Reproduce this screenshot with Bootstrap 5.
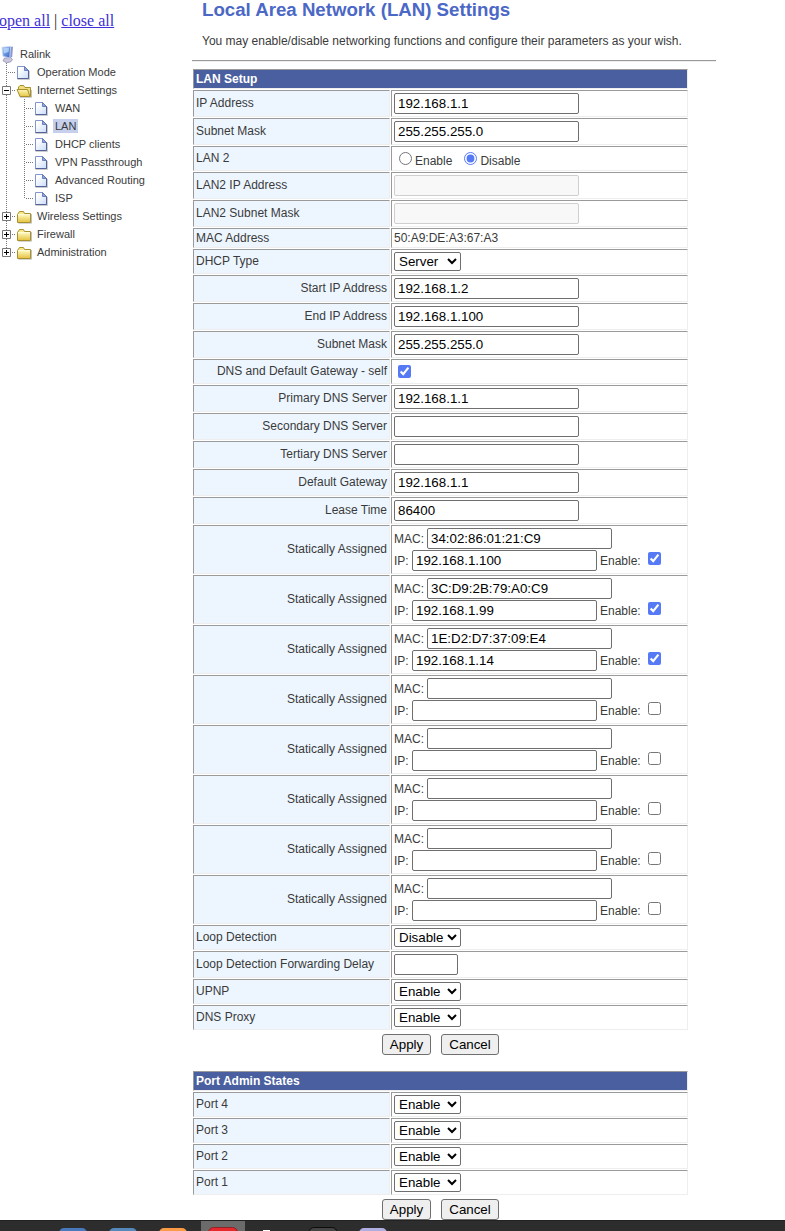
<!DOCTYPE html>
<html lang="en">
<head>
<meta charset="utf-8">
<title>LAN Settings</title>
<meta name="viewport" content="width=device-width, initial-scale=1">
<link href="https://cdn.jsdelivr.net/npm/bootstrap@5.3.0/dist/css/bootstrap.min.css" rel="stylesheet">
<style>
body{font:12px/14px "Liberation Sans",Arial,sans-serif;color:#3a3a3a;height:1231px;background:#fff}
.page-area{height:1220px}
.side{width:192px;padding-top:11px}
.toggle-links{font:16px/20px "Liberation Serif","Times New Roman",serif;margin-left:-1px;color:#222;height:34px;white-space:pre}
.toggle-links a{color:#4030d8;text-decoration:underline}
.tree{margin-left:-2px;font-size:11px;line-height:18px}
.tree .line{height:18px}
.tree svg{width:18px;height:18px;flex:none}
.tree span{margin-left:3px;white-space:nowrap}
.tree .root{margin-left:4px}
.tree .current{background:#c6d0ec;line-height:14px;height:14px;margin:2px 0 0 1px;padding:0 2px}
.main-area{width:524px}
h1{font-size:18.667px;line-height:22px;font-weight:bold;color:#4b68c6;margin:-1px 0 13px 10px;white-space:nowrap}
.intro{margin:0 0 12px 10px;white-space:nowrap}
.rule{height:2px;border-top:1px solid #9a9a9a;border-bottom:1px solid #eee;margin-bottom:6px}
.form-grid{width:497px;border-collapse:separate;border-spacing:1px;table-layout:fixed;line-height:14px}
.form-grid col:first-child{width:197px}
.form-grid th,.form-grid td{border:1px solid;border-color:#9a9a9a #eee #eee #9a9a9a;padding:0 2px;vertical-align:middle}
.form-grid .title{background:#4a5f9f;color:#fff;height:20px}
.form-grid .head{background:#edf6ff;font-weight:normal;text-align:left;padding-bottom:1px}
.form-grid .sub{text-align:right}
.h27 td{height:27px}.h25 td{height:25px}.h20 td{height:20px}.h49 td{height:49px}
.fld,.pick,.push{font:13.333px "Liberation Sans",Arial,sans-serif;color:#000;box-sizing:border-box}
.fld{width:185px;height:21px;border:1px solid #6f6f6f;border-radius:2px;padding:1px 3px;display:block;background:#fff}
.fld:disabled{background:#f8f8f8;border-color:#cfcfcf}
.fld.short{width:64px}
.pick{width:67px;height:19px;display:block;border:1px solid #6f6f6f;border-radius:2px;background:#fff}
.push{height:21px;border:1px solid #6f6f6f;border-radius:3px;background:#efefef;padding:0}
.push.apply{width:49px}.push.cancel{width:58px}
.form-grid input[type=checkbox],.form-grid input[type=radio]{width:13px;height:13px;margin:0;accent-color:#567af6;flex:none}
.lead-mac{width:33px}.lead-ip{width:18px}
.pair{height:22px;white-space:nowrap}
.pair:last-child{height:21px}
.pair .tick{margin:-4px 0 0 7px!important}
.pair .ip-field{margin-right:3px}
.radios{padding:2px 0 0 5px}
.radios label{margin:2px 12px 0 3px}
.buttons{gap:10px;margin:3px 0 15px 190px;height:21px}
.taskbar{height:11px;background:#2d2d2d;border-top:1px solid #222}
.taskbar svg{display:block}
</style>
</head>
<body class="overflow-hidden">
<svg width="0" height="0" class="position-absolute">
<defs>
<linearGradient id="gp" x1="0" y1="0" x2="1" y2="1"><stop offset=".2" stop-color="#fff"/><stop offset="1" stop-color="#c9dcfa"/></linearGradient>
<linearGradient id="gf" x1="0" y1="0" x2="0" y2="1"><stop offset="0" stop-color="#fdf6b8"/><stop offset="1" stop-color="#e6c545"/></linearGradient>
<linearGradient id="gm" x1="0" y1="0" x2="1" y2="1"><stop offset="0" stop-color="#a5c8f4"/><stop offset="1" stop-color="#2f62c8"/></linearGradient>
<symbol id="page" viewBox="0 0 18 18"><path d="M1.500 16.500h12V8" fill="none" stroke="#aaa" opacity=".6"/><path d="M1.500 3.500h7l4 4v8h-11z" fill="url(#gp)" stroke="#8196cf"/><path d="M8.500 3.500v4h4z" fill="#8fa4da" stroke="#5a6cae" stroke-width=".8"/><path d="M12.500 7.500v8h-11" fill="none" stroke="#54619d"/></symbol>
<symbol id="folder" viewBox="0 0 18 18"><path d="M2.500 16.200h13V7" fill="none" stroke="#999" opacity=".6"/><path d="M1.500 7.500l1-1.500 1-1.500h4l1 2h6v9h-13z" fill="#f6e88c" stroke="#a8902c"/><path d="M2 8h12v7H2z" fill="url(#gf)"/><path d="M2 7.500h12" stroke="#fffbd8"/></symbol>
<symbol id="open" viewBox="0 0 18 18"><path d="M4 16.300h11.500V9" fill="none" stroke="#999" opacity=".6"/><path d="M2.500 9V6l1.500-1.500h3.500l1.500 2h5.500v9H4z" fill="#f0df7c" stroke="#a8902c"/><path d="M1 8.500h10.500l2.500 7H4z" fill="url(#gf)" stroke="#a8902c"/></symbol>
<symbol id="pc" viewBox="0 0 18 18"><path d="M6.500 13l6-.5 2 2-2 2.500-4 .8-3.500-2z" fill="#c9c6dc" stroke="#77779c" stroke-width=".6"/><path d="M12.500 2l2.500-.4-.8 10.400-2.200 1z" fill="#8e96cc"/><path d="M4 2.300l8.700-.8-1 11.500-6.700-1.800z" fill="url(#gm)" stroke="#c3cff0" stroke-width=".8"/><path d="M5.300 3.200l5.700-.4-.4 4.200-4.800 1.500z" fill="#cae6fc" opacity=".65"/></symbol>
<symbol id="v" viewBox="0 0 18 18"><path d="M8.500 0v18" stroke="#777" stroke-dasharray="1 1"/></symbol>
<symbol id="tee" viewBox="0 0 18 18"><path d="M8.500 0v18M10 9.500h8" stroke="#777" stroke-dasharray="1 1"/></symbol>
<symbol id="ell" viewBox="0 0 18 18"><path d="M8.500 0v10M10 9.500h8" stroke="#777" stroke-dasharray="1 1"/></symbol>
<symbol id="minus" viewBox="0 0 18 18"><path d="M8.500 0v18M14 9.500h4" stroke="#777" stroke-dasharray="1 1"/><path d="M4.500 5.500h8v8h-8z" fill="#fff" stroke="#777"/><path d="M6 9.500h5" stroke="#000"/></symbol>
<symbol id="plus" viewBox="0 0 18 18"><path d="M8.500 0v18M14 9.500h4" stroke="#777" stroke-dasharray="1 1"/><path d="M4.500 5.500h8v8h-8z" fill="#fff" stroke="#777"/><path d="M6 9.500h5M8.500 7v5" stroke="#000"/></symbol>
<symbol id="pluslast" viewBox="0 0 18 18"><path d="M8.500 0v5M14 9.500h4" stroke="#777" stroke-dasharray="1 1"/><path d="M4.500 5.500h8v8h-8z" fill="#fff" stroke="#777"/><path d="M6 9.500h5M8.500 7v5" stroke="#000"/></symbol>
</defs>
</svg>
<div class="page-area d-flex overflow-hidden">
<nav class="side flex-shrink-0">
<div class="toggle-links"><a href="#">open all</a> | <a href="#">close all</a></div>
<div class="tree">
<div class="line d-flex"><svg><use href="#pc"/></svg><span class="root">Ralink</span></div>
<div class="line d-flex"><svg><use href="#tee"/></svg><svg><use href="#page"/></svg><span>Operation Mode</span></div>
<div class="line d-flex"><svg><use href="#minus"/></svg><svg><use href="#open"/></svg><span>Internet Settings</span></div>
<div class="line d-flex"><svg><use href="#v"/></svg><svg><use href="#tee"/></svg><svg><use href="#page"/></svg><span>WAN</span></div>
<div class="line d-flex"><svg><use href="#v"/></svg><svg><use href="#tee"/></svg><svg><use href="#page"/></svg><span class="current">LAN</span></div>
<div class="line d-flex"><svg><use href="#v"/></svg><svg><use href="#tee"/></svg><svg><use href="#page"/></svg><span>DHCP clients</span></div>
<div class="line d-flex"><svg><use href="#v"/></svg><svg><use href="#tee"/></svg><svg><use href="#page"/></svg><span>VPN Passthrough</span></div>
<div class="line d-flex"><svg><use href="#v"/></svg><svg><use href="#tee"/></svg><svg><use href="#page"/></svg><span>Advanced Routing</span></div>
<div class="line d-flex"><svg><use href="#v"/></svg><svg><use href="#ell"/></svg><svg><use href="#page"/></svg><span>ISP</span></div>
<div class="line d-flex"><svg><use href="#plus"/></svg><svg><use href="#folder"/></svg><span>Wireless Settings</span></div>
<div class="line d-flex"><svg><use href="#plus"/></svg><svg><use href="#folder"/></svg><span>Firewall</span></div>
<div class="line d-flex"><svg><use href="#pluslast"/></svg><svg><use href="#folder"/></svg><span>Administration</span></div>
</div>
</nav>
<main class="main-area flex-shrink-0">
<h1>Local Area Network (LAN) Settings</h1>
<p class="intro">You may enable/disable networking functions and configure their parameters as your wish.</p>
<div class="rule"></div>
<table class="form-grid">
<colgroup><col><col></colgroup>
<tbody>
<tr><th class="title" colspan="2">LAN Setup</th></tr>
<tr class="h27"><td class="head">IP Address</td><td><input class="fld" value="192.168.1.1"></td></tr>
<tr class="h27"><td class="head">Subnet Mask</td><td><input class="fld" value="255.255.255.0"></td></tr>
<tr class="h25"><td class="head">LAN 2</td><td><div class="d-flex align-items-start radios"><input type="radio" name="lan2"><label>Enable</label><input type="radio" name="lan2" checked><label>Disable</label></div></td></tr>
<tr class="h27"><td class="head">LAN2 IP Address</td><td><input class="fld" disabled></td></tr>
<tr class="h27"><td class="head">LAN2 Subnet Mask</td><td><input class="fld" disabled></td></tr>
<tr class="h20"><td class="head">MAC Address</td><td>50:A9:DE:A3:67:A3</td></tr>
<tr class="h25"><td class="head">DHCP Type</td><td><select class="pick"><option>Server</option></select></td></tr>
<tr class="h27"><td class="head sub">Start IP Address</td><td><input class="fld" value="192.168.1.2"></td></tr>
<tr class="h27"><td class="head sub">End IP Address</td><td><input class="fld" value="192.168.1.100"></td></tr>
<tr class="h27"><td class="head sub">Subnet Mask</td><td><input class="fld" value="255.255.255.0"></td></tr>
<tr class="h25"><td class="head sub">DNS and Default Gateway - self</td><td><input type="checkbox" class="d-block ms-1" checked></td></tr>
<tr class="h27"><td class="head sub">Primary DNS Server</td><td><input class="fld" value="192.168.1.1"></td></tr>
<tr class="h27"><td class="head sub">Secondary DNS Server</td><td><input class="fld"></td></tr>
<tr class="h27"><td class="head sub">Tertiary DNS Server</td><td><input class="fld"></td></tr>
<tr class="h27"><td class="head sub">Default Gateway</td><td><input class="fld" value="192.168.1.1"></td></tr>
<tr class="h27"><td class="head sub">Lease Time</td><td><input class="fld" value="86400"></td></tr>
<tr class="h49"><td class="head sub">Statically Assigned</td><td><div class="pair d-flex"><span class="lead-mac pt-1">MAC:</span><input class="fld" value="34:02:86:01:21:C9"></div><div class="pair d-flex align-items-center"><span class="lead-ip">IP:</span><input class="fld ip-field" value="192.168.1.100">Enable:<input type="checkbox" class="tick" checked></div></td></tr>
<tr class="h49"><td class="head sub">Statically Assigned</td><td><div class="pair d-flex"><span class="lead-mac pt-1">MAC:</span><input class="fld" value="3C:D9:2B:79:A0:C9"></div><div class="pair d-flex align-items-center"><span class="lead-ip">IP:</span><input class="fld ip-field" value="192.168.1.99">Enable:<input type="checkbox" class="tick" checked></div></td></tr>
<tr class="h49"><td class="head sub">Statically Assigned</td><td><div class="pair d-flex"><span class="lead-mac pt-1">MAC:</span><input class="fld" value="1E:D2:D7:37:09:E4"></div><div class="pair d-flex align-items-center"><span class="lead-ip">IP:</span><input class="fld ip-field" value="192.168.1.14">Enable:<input type="checkbox" class="tick" checked></div></td></tr>
<tr class="h49"><td class="head sub">Statically Assigned</td><td><div class="pair d-flex"><span class="lead-mac pt-1">MAC:</span><input class="fld"></div><div class="pair d-flex align-items-center"><span class="lead-ip">IP:</span><input class="fld ip-field">Enable:<input type="checkbox" class="tick"></div></td></tr>
<tr class="h49"><td class="head sub">Statically Assigned</td><td><div class="pair d-flex"><span class="lead-mac pt-1">MAC:</span><input class="fld"></div><div class="pair d-flex align-items-center"><span class="lead-ip">IP:</span><input class="fld ip-field">Enable:<input type="checkbox" class="tick"></div></td></tr>
<tr class="h49"><td class="head sub">Statically Assigned</td><td><div class="pair d-flex"><span class="lead-mac pt-1">MAC:</span><input class="fld"></div><div class="pair d-flex align-items-center"><span class="lead-ip">IP:</span><input class="fld ip-field">Enable:<input type="checkbox" class="tick"></div></td></tr>
<tr class="h49"><td class="head sub">Statically Assigned</td><td><div class="pair d-flex"><span class="lead-mac pt-1">MAC:</span><input class="fld"></div><div class="pair d-flex align-items-center"><span class="lead-ip">IP:</span><input class="fld ip-field">Enable:<input type="checkbox" class="tick"></div></td></tr>
<tr class="h49"><td class="head sub">Statically Assigned</td><td><div class="pair d-flex"><span class="lead-mac pt-1">MAC:</span><input class="fld"></div><div class="pair d-flex align-items-center"><span class="lead-ip">IP:</span><input class="fld ip-field">Enable:<input type="checkbox" class="tick"></div></td></tr>
<tr class="h25"><td class="head">Loop Detection</td><td><select class="pick"><option>Disable</option></select></td></tr>
<tr class="h27"><td class="head">Loop Detection Forwarding Delay</td><td><input class="fld short"></td></tr>
<tr class="h25"><td class="head">UPNP</td><td><select class="pick"><option>Enable</option></select></td></tr>
<tr class="h25"><td class="head">DNS Proxy</td><td><select class="pick"><option>Enable</option></select></td></tr>
</tbody>
</table>
<div class="buttons d-flex"><button class="push apply">Apply</button><button class="push cancel">Cancel</button></div>
<table class="form-grid">
<colgroup><col><col></colgroup>
<tbody>
<tr><th class="title" colspan="2">Port Admin States</th></tr>
<tr class="h25"><td class="head">Port 4</td><td><select class="pick"><option>Enable</option></select></td></tr>
<tr class="h25"><td class="head">Port 3</td><td><select class="pick"><option>Enable</option></select></td></tr>
<tr class="h25"><td class="head">Port 2</td><td><select class="pick"><option>Enable</option></select></td></tr>
<tr class="h25"><td class="head">Port 1</td><td><select class="pick"><option>Enable</option></select></td></tr>
</tbody>
</table>
<div class="buttons d-flex"><button class="push apply">Apply</button><button class="push cancel">Cancel</button></div>
</main>
</div>
<footer class="taskbar overflow-hidden">
<svg width="785" height="10" viewBox="0 0 785 10">
<path d="M201 0h44v10h-44z" fill="#6b6b6b"/>
<rect x="59" y="7" width="28" height="20" rx="5" fill="#4a78bd"/>
<rect x="109" y="7" width="28" height="20" rx="5" fill="#5588bb"/>
<rect x="159" y="7" width="28" height="20" rx="5" fill="#fb9b45"/>
<rect x="208.500" y="6.500" width="29" height="20" rx="5" fill="#e52a2e" stroke="#8e2328"/>
<path d="M263 9h7v1h-7z" fill="#fff"/>
<rect x="309" y="6.500" width="28" height="20" rx="5" fill="#444" stroke="#0c0c0c"/>
<rect x="359" y="7" width="28" height="20" rx="5" fill="#b0aee0"/>
</svg>
</footer>
<script src="https://cdn.jsdelivr.net/npm/bootstrap@5.3.0/dist/js/bootstrap.bundle.min.js"></script>
</body>
</html>
